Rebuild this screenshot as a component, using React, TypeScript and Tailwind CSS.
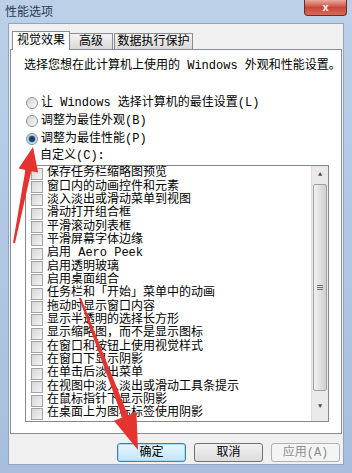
import React from 'react'

const items = [
  '保存任务栏缩略图预览',
  '窗口内的动画控件和元素',
  '淡入淡出或滑动菜单到视图',
  '滑动打开组合框',
  '平滑滚动列表框',
  '平滑屏幕字体边缘',
  '启用 Aero Peek',
  '启用透明玻璃',
  '启用桌面组合',
  '任务栏和「开始」菜单中的动画',
  '拖动时显示窗口内容',
  '显示半透明的选择长方形',
  '显示缩略图，而不是显示图标',
  '在窗口和按钮上使用视觉样式',
  '在窗口下显示阴影',
  '在单击后淡出菜单',
  '在视图中淡入淡出或滑动工具条提示',
  '在鼠标指针下显示阴影',
  '在桌面上为图标标签使用阴影'
]

const mono = "font-['Liberation_Mono','Noto_Sans_CJK_SC',monospace]"

function Radio({ checked, label }: { checked?: boolean; label: string }) {
  return (
    <div className="flex items-center h-[18px]">
      <div className="w-[12px] h-[12px] ml-[15px] rounded-full border border-[#8f9091] bg-gradient-to-br from-[#d4d4d4] to-[#fafafa] flex items-center justify-center">
        {checked && <div className="w-[6px] h-[6px] rounded-full bg-[#1b3e5e] shadow-[0_0_2px_1px_#6bb3e0]" />}
      </div>
      <span className="ml-[3px] text-[12px] leading-[14px] text-black">{label}</span>
    </div>
  )
}

function Arrow({ tail, tip, head, half }: { tail: number[]; tip: number[]; head: number; half: number }) {
  const dx = tip[0] - tail[0]
  const dy = tip[1] - tail[1]
  const len = Math.sqrt(dx * dx + dy * dy)
  const ux = dx / len
  const uy = dy / len
  const px = -uy
  const py = ux
  const bx = tip[0] - ux * head
  const by = tip[1] - uy * head
  const pts = [
    [tail[0] + px * 1, tail[1] + py * 1],
    [bx + px * 3, by + py * 3],
    [bx + px * half, by + py * half],
    tip,
    [bx - px * half, by - py * half],
    [bx - px * 3, by - py * 3],
    [tail[0] - px * 1, tail[1] - py * 1]
  ]
  return <polygon points={pts.map((p) => p.join(',')).join(' ')} fill="#e5332f" />
}

export default function App() {
  return (
    <div className={`relative w-[352px] h-[473px] overflow-hidden bg-gradient-to-b from-[#bcd0e8] to-[#a7bfdc] ${mono}`}>
      {/* title bar */}
      <div className="h-[23px] flex items-start justify-between">
        <span className="ml-[5px] mt-[4px] text-[12px] leading-[14px] text-[#2a3b50] font-['Noto_Sans_CJK_SC',sans-serif]">
          性能选项
        </span>
        <div className="mr-[5px] w-[43px] h-[16px] rounded-b-[4px] border border-t-0 border-[#6b2a24] bg-gradient-to-b from-[#e9a99c] via-[#c8493a] to-[#d86a56] flex items-center justify-center">
          <span className="text-white text-[11px] leading-[11px] font-bold font-['Liberation_Sans',sans-serif]">x</span>
        </div>
      </div>

      {/* body */}
      <div className="mx-[8px] h-[442px] bg-[#f0f0f0] border border-[#8ea6c4] flex flex-col">
        {/* tabs */}
        <div className="flex items-end pl-[3px] mt-[6px] h-[19px] text-[12px] text-black">
          <div className="relative z-10 h-[19px] w-[58px] bg-white border border-b-0 border-[#898c95] flex items-center justify-center mb-[-1px] pb-[1px]">
            视觉效果
          </div>
          <div className="h-[16px] w-[43px] border border-l-0 border-b-0 border-[#898c95] bg-gradient-to-b from-[#f3f3f3] to-[#d9d9d9] flex items-center justify-center">
            高级
          </div>
          <div className="ml-[1px] h-[16px] w-[79px] border border-b-0 border-[#898c95] bg-gradient-to-b from-[#f3f3f3] to-[#d9d9d9] flex items-center justify-center">
            数据执行保护
          </div>
        </div>

        {/* panel */}
        <div className="mx-[1px] h-[385px] bg-white border border-[#898c95] flex flex-col text-black">
          <div className="mt-[9px] ml-[13px] text-[12px] leading-[14px]">选择您想在此计算机上使用的 Windows 外观和性能设置。</div>
          <div className="mt-[21px] flex flex-col">
            <Radio label="让 Windows 选择计算机的最佳设置(L)" />
            <Radio label="调整为最佳外观(B)" />
            <Radio checked label="调整为最佳性能(P)" />
          </div>
          <div className="ml-[29px] mt-[1px] text-[12px] leading-[14px]">自定义(C):</div>
          <div className="ml-[14px] mt-[2px] w-[304px] h-[257px] border border-[#828790] flex">
            <div className="flex-1 flex flex-col pt-[1px]">
              {items.map((t) => (
                <div key={t} className="flex items-center h-[13.35px]">
                  <div className="ml-[5px] w-[12px] h-[12px] border border-[#a3a3a3] bg-gradient-to-br from-[#d6d6d6] to-[#f4f4f4]" />
                  <span className="ml-[4px] text-[12px] leading-[13px] whitespace-nowrap">{t}</span>
                </div>
              ))}
            </div>
            <div className="w-[17px] bg-[#eaeaea] border-l border-[#dcdcdc] flex flex-col items-center">
              <div className="h-[16px] w-full flex items-center justify-center text-[7px] text-[#4d4d4d]">▲</div>
              <div className="mt-[2px] w-[14px] h-[207px] rounded-[2px] border border-[#a0a0a0] bg-gradient-to-r from-[#f1f1f1] via-[#e0e0e0] to-[#cfcfcf] flex items-center justify-center">
                <div className="flex flex-col gap-[1px]">
                  <div className="w-[6px] h-[1px] bg-[#707070]" />
                  <div className="w-[6px] h-[1px] bg-[#707070]" />
                  <div className="w-[6px] h-[1px] bg-[#707070]" />
                </div>
              </div>
              <div className="flex-1 w-full flex items-center justify-center text-[7px] text-[#4d4d4d]">▼</div>
            </div>
          </div>
        </div>

        {/* buttons */}
        <div className="mt-[9px] flex justify-end gap-[8px] pr-[3px] text-[12px]">
          <div className="w-[69px] h-[19px] rounded-[3px] border border-[#3c7fb1] bg-gradient-to-b from-[#eaf6fd] to-[#bee6fd] shadow-[inset_0_0_0_1px_#a7d9f5] flex items-center justify-center text-black">
            确定
          </div>
          <div className="w-[69px] h-[19px] rounded-[3px] border border-[#707070] bg-gradient-to-b from-[#f2f2f2] to-[#dcdcdc] flex items-center justify-center text-black">
            取消
          </div>
          <div className="w-[69px] h-[19px] rounded-[3px] border border-[#adb2b5] bg-[#f4f4f4] flex items-center justify-center text-[#8d8d8d]">
            应用(A)
          </div>
        </div>
      </div>

      {/* annotation arrows */}
      <svg className="absolute left-0 top-0" width="352" height="473">
        <Arrow tail={[14, 243]} tip={[33, 147]} head={24} half={10} />
        <Arrow tail={[80, 298]} tip={[138, 450]} head={36} half={12} />
      </svg>
    </div>
  )
}
